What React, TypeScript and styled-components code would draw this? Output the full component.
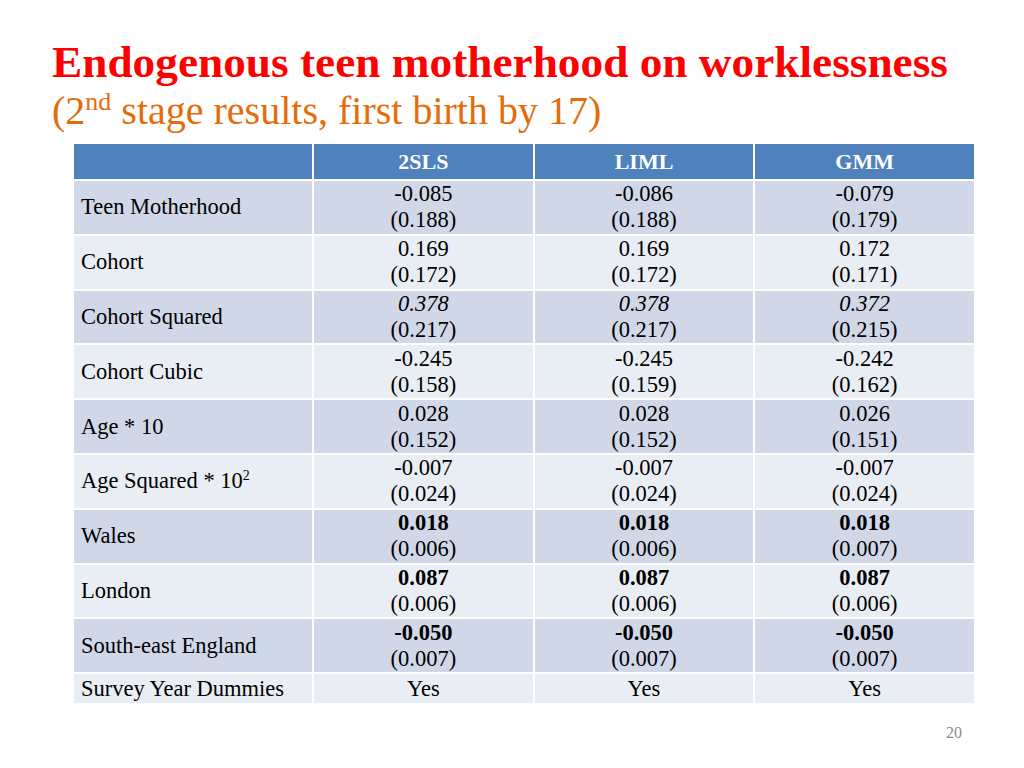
import React from 'react';
import styled, { createGlobalStyle } from 'styled-components';

const GlobalStyle = createGlobalStyle`
  html, body {
    margin: 0;
    padding: 0;
    background: #ffffff;
  }
  body {
    font-family: "Liberation Serif", "Times New Roman", serif;
  }
`;

type Style = 'plain' | 'italic' | 'bold';

type Row = {
  label: React.ReactNode;
  coef: [string, string, string];
  se: [string, string, string];
  style?: Style;
};

const rows: Row[] = [
  { label: 'Teen Motherhood', coef: ['-0.085', '-0.086', '-0.079'], se: ['(0.188)', '(0.188)', '(0.179)'] },
  { label: 'Cohort', coef: ['0.169', '0.169', '0.172'], se: ['(0.172)', '(0.172)', '(0.171)'] },
  { label: 'Cohort Squared', coef: ['0.378', '0.378', '0.372'], se: ['(0.217)', '(0.217)', '(0.215)'], style: 'italic' },
  { label: 'Cohort Cubic', coef: ['-0.245', '-0.245', '-0.242'], se: ['(0.158)', '(0.159)', '(0.162)'] },
  { label: 'Age * 10', coef: ['0.028', '0.028', '0.026'], se: ['(0.152)', '(0.152)', '(0.151)'] },
  {
    label: (
      <>
        Age Squared * 10<sup>2</sup>
      </>
    ),
    coef: ['-0.007', '-0.007', '-0.007'],
    se: ['(0.024)', '(0.024)', '(0.024)'],
  },
  { label: 'Wales', coef: ['0.018', '0.018', '0.018'], se: ['(0.006)', '(0.006)', '(0.007)'], style: 'bold' },
  { label: 'London', coef: ['0.087', '0.087', '0.087'], se: ['(0.006)', '(0.006)', '(0.006)'], style: 'bold' },
  { label: 'South-east England', coef: ['-0.050', '-0.050', '-0.050'], se: ['(0.007)', '(0.007)', '(0.007)'], style: 'bold' },
];

const Slide = styled.div`
  width: 1024px;
  height: 768px;
  box-sizing: border-box;
  padding: 36px 48px 0 52px;
  display: flex;
  flex-direction: column;
`;

const Title = styled.h1`
  margin: 0;
  font-family: "Liberation Serif", "Times New Roman", serif;
  font-size: 45.3px;
  line-height: 52px;
  font-weight: bold;
  color: #ff0000;
  white-space: nowrap;
`;

const Subtitle = styled.div`
  font-family: "Liberation Serif", "Times New Roman", serif;
  font-size: 40px;
  line-height: 46px;
  color: #e46c0a;
  sup {
    font-size: 26px;
    line-height: 0;
  }
`;

const Table = styled.table`
  margin: 8px 0 0 20px;
  width: 904px;
  border-collapse: collapse;
  table-layout: fixed;
  font-family: "Liberation Serif", "Times New Roman", serif;
  font-size: 22.5px;
  color: #000;
`;

const HeadCell = styled.th`
  background: #4f81bd;
  color: #fff;
  font-weight: bold;
  font-size: 22px;
  height: 35px;
  padding: 0;
  border: 2px solid #fff;
  text-align: center;
`;

const BodyRow = styled.tr<{ $alt: boolean }>`
  background: ${(p) => (p.$alt ? '#e9edf4' : '#d0d8e8')};
`;

const LabelCell = styled.td<{ $short?: boolean }>`
  height: ${(p) => (p.$short ? '29px' : '52.8px')};
  padding: 0 0 0 7px;
  border: 2px solid #fff;
  text-align: left;
  line-height: 26px;
  sup {
    font-size: 14px;
    line-height: 0;
  }
`;

const ValueCell = styled.td<{ $short?: boolean }>`
  height: ${(p) => (p.$short ? '29px' : '52.8px')};
  padding: 0;
  border: 2px solid #fff;
  text-align: center;
  line-height: 26px;
`;

const Coef = styled.div<{ $style?: Style }>`
  font-style: ${(p) => (p.$style === 'italic' ? 'italic' : 'normal')};
  font-weight: ${(p) => (p.$style === 'bold' ? 'bold' : 'normal')};
`;

const PageNumber = styled.div`
  margin-top: auto;
  align-self: flex-end;
  margin-right: 14px;
  margin-bottom: 26px;
  font-family: "Liberation Serif", "Times New Roman", serif;
  font-size: 16px;
  color: #8c8c8c;
`;

export default function App() {
  return (
    <>
      <GlobalStyle />
      <Slide>
        <Title>Endogenous teen motherhood on worklessness</Title>
        <Subtitle>
          (2<sup>nd</sup> stage results, first birth by 17)
        </Subtitle>
        <Table>
          <colgroup>
            <col style={{ width: '240px' }} />
            <col />
            <col />
            <col />
          </colgroup>
          <thead>
            <tr>
              <HeadCell />
              <HeadCell>2SLS</HeadCell>
              <HeadCell>LIML</HeadCell>
              <HeadCell>GMM</HeadCell>
            </tr>
          </thead>
          <tbody>
            {rows.map((r, i) => (
              <BodyRow key={i} $alt={i % 2 === 1}>
                <LabelCell>{r.label}</LabelCell>
                {r.coef.map((c, j) => (
                  <ValueCell key={j}>
                    <Coef $style={r.style}>{c}</Coef>
                    <div>{r.se[j]}</div>
                  </ValueCell>
                ))}
              </BodyRow>
            ))}
            <BodyRow $alt={true}>
              <LabelCell $short>Survey Year Dummies</LabelCell>
              <ValueCell $short>Yes</ValueCell>
              <ValueCell $short>Yes</ValueCell>
              <ValueCell $short>Yes</ValueCell>
            </BodyRow>
          </tbody>
        </Table>
        <PageNumber>20</PageNumber>
      </Slide>
    </>
  );
}
